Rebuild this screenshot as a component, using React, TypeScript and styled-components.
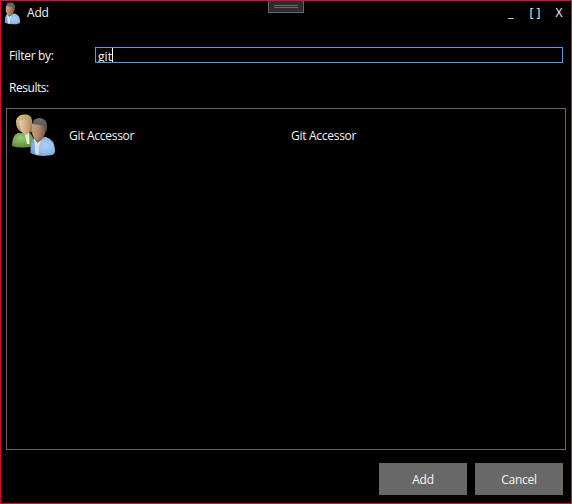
import React from "react";
import styled, { createGlobalStyle } from "styled-components";

const GlobalStyle = createGlobalStyle`
  * { box-sizing: border-box; }
  body { margin: 0; background: #000; }
`;

const Window = styled.div`
  width: 572px;
  height: 504px;
  display: flex;
  flex-direction: column;
  position: relative;
  overflow: hidden;
  background: #000;
  border: 1px solid #e80538;
  color: #f6f6f6;
  font: 12px/16px "Open Sans", "Noto Sans", sans-serif;
`;

const TitleBar = styled.header`
  height: 24px;
  display: flex;
  align-items: center;
  padding: 0 0 0 2px;
`;

const Title = styled.span`
  flex: 1;
  margin-left: 6px;
  letter-spacing: -0.2px;
`;

const WindowButton = styled.button<{ $spacing?: number }>`
  width: 24px;
  height: 24px;
  padding: 0;
  border: 0;
  background: none;
  color: inherit;
  font: inherit;
  letter-spacing: ${(p) => p.$spacing ?? 0}px;
  text-align: center;
`;

const BracketButton = styled(WindowButton)`
  padding-left: 3px;
`;

const DragHandle = styled.div`
  position: absolute;
  top: -1px;
  left: 267px;
  width: 36px;
  height: 13px;
  padding: 5px 5px 0;
  background: #2d2d2d;
  border: 1px solid #666;
  border-top: 0;
  display: flex;
  flex-direction: column;
  gap: 1px;
`;

const Grip = styled.span`
  height: 1px;
  background: #696969;
`;

const FilterRow = styled.div`
  display: flex;
  align-items: center;
  height: 16px;
  margin-top: 22px;
  padding: 0 8px;
`;

const Label = styled.label`
  width: 86px;
  padding-top: 2px;
  letter-spacing: -0.32px;
`;

const FilterBox = styled.div`
  flex: 1;
  height: 16px;
  display: flex;
  border: 1px solid #569de5;
  padding-left: 2px;
  overflow: hidden;
`;

const FilterText = styled.span`
  height: 18px;
  line-height: 18px;
  flex: none;
  letter-spacing: 0.1px;
`;

const Caret = styled.span`
  width: 1px;
  height: 14px;
  background: #fff;
`;

const ResultsHeading = styled.div`
  height: 16px;
  margin: 17px 8px 11px;
  letter-spacing: -0.45px;
`;

const ResultsList = styled.div`
  height: 342px;
  margin: 1px 5px 0;
  border: 1px solid #686868;
`;

const ResultRow = styled.div`
  height: 54px;
  display: grid;
  grid-template-columns: 62px 222px 1fr;
  align-items: center;
`;

const Cell = styled.span`
  letter-spacing: -0.28px;
`;

const Footer = styled.footer`
  display: flex;
  justify-content: flex-end;
  gap: 8px;
  padding: 13px 8px 0;
`;

const ActionButton = styled.button`
  width: 88px;
  height: 32px;
  padding: 2px 0 0;
  border: 0;
  background: #686868;
  color: #f6f6f6;
  font: inherit;
  letter-spacing: -0.25px;
`;

const Icon = styled.svg`
  display: block;
  flex: none;
`;

const GroupIcon = styled(Icon)`
  margin: 0 0 0 4px;
`;

function Gradients({ id }: { id: string }) {
  return (
    <defs>
      <linearGradient id={`${id}-hair`} x1="0" y1="0" x2="0" y2="1">
        <stop offset="0" stopColor="#6f7072" />
        <stop offset="1" stopColor="#414346" />
      </linearGradient>
      <linearGradient id={`${id}-skin`} x1="0" y1="0" x2="1" y2=".2">
        <stop offset="0" stopColor="#c9a07e" />
        <stop offset=".5" stopColor="#b58b68" />
        <stop offset="1" stopColor="#83593c" />
      </linearGradient>
      <radialGradient id={`${id}-shirt`} cx=".6" cy=".45" r=".65">
        <stop offset="0" stopColor="#add0f4" />
        <stop offset=".6" stopColor="#91bce9" />
        <stop offset="1" stopColor="#6c9bd3" />
      </radialGradient>
      <linearGradient id={`${id}-blond`} x1="0" y1="0" x2="1" y2="1">
        <stop offset="0" stopColor="#d8ca88" />
        <stop offset="1" stopColor="#8c7a3d" />
      </linearGradient>
      <linearGradient id={`${id}-fair`} x1="0" y1="0" x2="1" y2="0">
        <stop offset="0" stopColor="#efd0b3" />
        <stop offset="1" stopColor="#b58a67" />
      </linearGradient>
      <radialGradient id={`${id}-green`} cx=".4" cy=".35" r=".7">
        <stop offset="0" stopColor="#9bc574" />
        <stop offset="1" stopColor="#568e35" />
      </radialGradient>
    </defs>
  );
}

function BluePerson({ id }: { id: string }) {
  return (
    <g>
      <path d="M18.5 40Q18 28 22 25L34 24Q43 27 43 37Q44 42 37 42.5Q26 44 18.5 40Z" fill={`url(#${id}-shirt)`} />
      <path d="M22 26L29 28L27 33L26.5 42L23.5 41Q23 32 22 26Z" fill="#dce2eb" />
      <path d="M22 21L32 20L31.5 25L25.5 30L22 25Z" fill="#8b6146" />
      <path d="M20 11Q25 8 32 11Q35 15 33 21Q30 27 25 27Q20 25 20 18Z" fill={`url(#${id}-skin)`} />
      <path d="M20.5 11Q21 5 28 5Q35 6 35 13Q35.5 17 33.5 20Q33 16 31.5 13Q26 11 20.5 11Z" fill={`url(#${id}-hair)`} />
    </g>
  );
}

function PersonIcon() {
  return (
    <Icon width="18" height="23" viewBox="15.5 4 29 40" preserveAspectRatio="none">
      <Gradients id="user" />
      <BluePerson id="user" />
    </Icon>
  );
}

function PeopleIcon() {
  return (
    <GroupIcon width="46" height="46" viewBox="-1 0 46 46">
      <Gradients id="group" />
      <path d="M0 33Q0 22 6 20L18 20Q22 24 23 33Q9 36 0 33Z" fill="url(#group-green)" />
      <path d="M12.5 20L17 20L17.5 31L15 31Z" fill="#e5eadc" />
      <path d="M4 8Q5 2 12 1.5Q19 1 20 7Q21 13 20 19Q14 21 9 19Q4 16 4 8Z" fill="url(#group-blond)" />
      <path d="M7 8Q12 6 16 6Q19.5 9 19 14Q17 21 14 22Q8 20 7 8Z" fill="url(#group-fair)" />
      <BluePerson id="group" />
    </GroupIcon>
  );
}

export default function App() {
  return (
    <>
      <GlobalStyle />
      <Window>
        <TitleBar>
          <PersonIcon />
          <Title>Add</Title>
          <WindowButton>_</WindowButton>
          <BracketButton $spacing={3}>[]</BracketButton>
          <WindowButton>X</WindowButton>
        </TitleBar>
        <DragHandle>
          <Grip />
          <Grip />
        </DragHandle>
        <FilterRow>
          <Label>Filter by:</Label>
          <FilterBox>
            <FilterText>git</FilterText>
            <Caret />
          </FilterBox>
        </FilterRow>
        <ResultsHeading>Results:</ResultsHeading>
        <ResultsList>
          <ResultRow>
            <PeopleIcon />
            <Cell>Git Accessor</Cell>
            <Cell>Git Accessor</Cell>
          </ResultRow>
        </ResultsList>
        <Footer>
          <ActionButton>Add</ActionButton>
          <ActionButton>Cancel</ActionButton>
        </Footer>
      </Window>
    </>
  );
}
